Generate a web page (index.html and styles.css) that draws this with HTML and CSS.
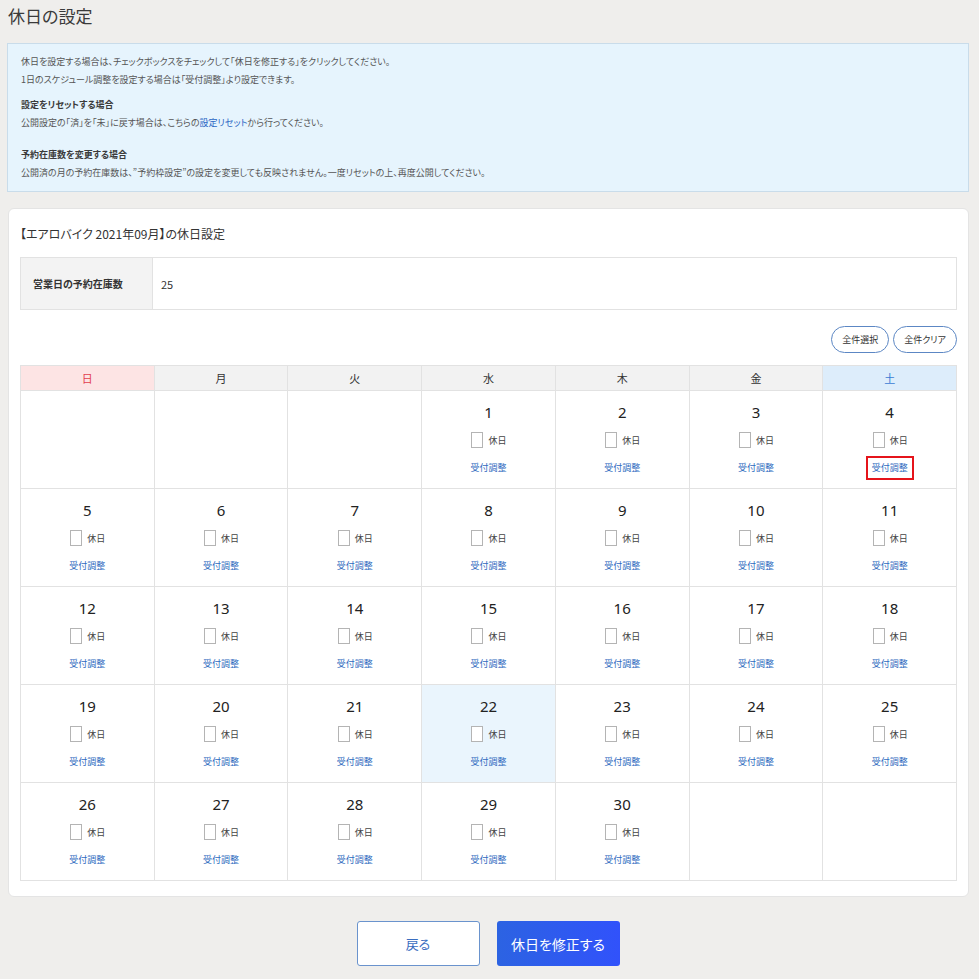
FILE: index.html
```html
<!DOCTYPE html>
<html lang="ja">
<head>
<meta charset="utf-8">
<title>休日の設定</title>
<link rel="stylesheet" href="styles.css">
</head>
<body>
<div class="page">
  <h1 class="title">休日の設定</h1>

  <div class="info">
    <p class="info-p">休日を設定する場合は、チェックボックスをチェックして「休日を修正する」をクリックしてください。<br>1日のスケジュール調整を設定する場合は「受付調整」より設定できます。</p>
    <p class="info-h">設定をリセットする場合</p>
    <p class="info-p">公開設定の「済」を「未」に戻す場合は、こちらの<a class="link" href="#">設定リセット</a>から行ってください。</p>
    <p class="info-h info-h2">予約在庫数を変更する場合</p>
    <p class="info-p">公開済の月の予約在庫数は、”予約枠設定”の設定を変更しても反映されません。一度リセットの上、再度公開してください。</p>
  </div>

  <div class="card">
    <h2 class="card-title">【エアロバイク 2021年09月】の休日設定</h2>
    <div class="stock">
      <div class="stock-label">営業日の予約在庫数</div>
      <div class="stock-value">25</div>
    </div>

    <div class="tools">
      <button class="pill">全件選択</button>
      <button class="pill">全件クリア</button>
    </div>

    <div class="cal">
      <div class="head sun">日</div>
      <div class="head">月</div>
      <div class="head">火</div>
      <div class="head">水</div>
      <div class="head">木</div>
      <div class="head">金</div>
      <div class="head sat">土</div>

      <div class="day empty"></div>
      <div class="day empty"></div>
      <div class="day empty"></div>
      <div class="day"><div class="num">1</div><label class="hol"><input type="checkbox" class="cb"><span>休日</span></label><a class="adj" href="#">受付調整</a></div>
      <div class="day"><div class="num">2</div><label class="hol"><input type="checkbox" class="cb"><span>休日</span></label><a class="adj" href="#">受付調整</a></div>
      <div class="day"><div class="num">3</div><label class="hol"><input type="checkbox" class="cb"><span>休日</span></label><a class="adj" href="#">受付調整</a></div>
      <div class="day"><div class="num">4</div><label class="hol"><input type="checkbox" class="cb"><span>休日</span></label><a class="adj marked" href="#">受付調整</a></div>

      <div class="day"><div class="num">5</div><label class="hol"><input type="checkbox" class="cb"><span>休日</span></label><a class="adj" href="#">受付調整</a></div>
      <div class="day"><div class="num">6</div><label class="hol"><input type="checkbox" class="cb"><span>休日</span></label><a class="adj" href="#">受付調整</a></div>
      <div class="day"><div class="num">7</div><label class="hol"><input type="checkbox" class="cb"><span>休日</span></label><a class="adj" href="#">受付調整</a></div>
      <div class="day"><div class="num">8</div><label class="hol"><input type="checkbox" class="cb"><span>休日</span></label><a class="adj" href="#">受付調整</a></div>
      <div class="day"><div class="num">9</div><label class="hol"><input type="checkbox" class="cb"><span>休日</span></label><a class="adj" href="#">受付調整</a></div>
      <div class="day"><div class="num">10</div><label class="hol"><input type="checkbox" class="cb"><span>休日</span></label><a class="adj" href="#">受付調整</a></div>
      <div class="day"><div class="num">11</div><label class="hol"><input type="checkbox" class="cb"><span>休日</span></label><a class="adj" href="#">受付調整</a></div>

      <div class="day"><div class="num">12</div><label class="hol"><input type="checkbox" class="cb"><span>休日</span></label><a class="adj" href="#">受付調整</a></div>
      <div class="day"><div class="num">13</div><label class="hol"><input type="checkbox" class="cb"><span>休日</span></label><a class="adj" href="#">受付調整</a></div>
      <div class="day"><div class="num">14</div><label class="hol"><input type="checkbox" class="cb"><span>休日</span></label><a class="adj" href="#">受付調整</a></div>
      <div class="day"><div class="num">15</div><label class="hol"><input type="checkbox" class="cb"><span>休日</span></label><a class="adj" href="#">受付調整</a></div>
      <div class="day"><div class="num">16</div><label class="hol"><input type="checkbox" class="cb"><span>休日</span></label><a class="adj" href="#">受付調整</a></div>
      <div class="day"><div class="num">17</div><label class="hol"><input type="checkbox" class="cb"><span>休日</span></label><a class="adj" href="#">受付調整</a></div>
      <div class="day"><div class="num">18</div><label class="hol"><input type="checkbox" class="cb"><span>休日</span></label><a class="adj" href="#">受付調整</a></div>

      <div class="day"><div class="num">19</div><label class="hol"><input type="checkbox" class="cb"><span>休日</span></label><a class="adj" href="#">受付調整</a></div>
      <div class="day"><div class="num">20</div><label class="hol"><input type="checkbox" class="cb"><span>休日</span></label><a class="adj" href="#">受付調整</a></div>
      <div class="day"><div class="num">21</div><label class="hol"><input type="checkbox" class="cb"><span>休日</span></label><a class="adj" href="#">受付調整</a></div>
      <div class="day today"><div class="num">22</div><label class="hol"><input type="checkbox" class="cb"><span>休日</span></label><a class="adj" href="#">受付調整</a></div>
      <div class="day"><div class="num">23</div><label class="hol"><input type="checkbox" class="cb"><span>休日</span></label><a class="adj" href="#">受付調整</a></div>
      <div class="day"><div class="num">24</div><label class="hol"><input type="checkbox" class="cb"><span>休日</span></label><a class="adj" href="#">受付調整</a></div>
      <div class="day"><div class="num">25</div><label class="hol"><input type="checkbox" class="cb"><span>休日</span></label><a class="adj" href="#">受付調整</a></div>

      <div class="day"><div class="num">26</div><label class="hol"><input type="checkbox" class="cb"><span>休日</span></label><a class="adj" href="#">受付調整</a></div>
      <div class="day"><div class="num">27</div><label class="hol"><input type="checkbox" class="cb"><span>休日</span></label><a class="adj" href="#">受付調整</a></div>
      <div class="day"><div class="num">28</div><label class="hol"><input type="checkbox" class="cb"><span>休日</span></label><a class="adj" href="#">受付調整</a></div>
      <div class="day"><div class="num">29</div><label class="hol"><input type="checkbox" class="cb"><span>休日</span></label><a class="adj" href="#">受付調整</a></div>
      <div class="day"><div class="num">30</div><label class="hol"><input type="checkbox" class="cb"><span>休日</span></label><a class="adj" href="#">受付調整</a></div>
      <div class="day empty"></div>
      <div class="day empty"></div>
    </div>
  </div>

  <div class="actions">
    <button class="btn btn-back">戻る</button>
    <button class="btn btn-submit">休日を修正する</button>
  </div>
</div>
</body>
</html>
```

FILE: styles.css
```css
* { box-sizing: border-box; }

html, body {
  margin: 0;
  padding: 0;
  background: #efeeec;
}

body {
  font-family: "Noto Sans CJK JP", "Noto Sans", sans-serif;
  color: #333;
  font-feature-settings: "palt";
}

.page {
  width: 962px;
  margin-left: 7px;
  padding-top: 6px;
}

.title {
  margin: 0 0 17px 1px;
  font-size: 17px;
  line-height: 20px;
  font-weight: 400;
  color: #3a3a3a;
}

.info {
  background: #e6f4fd;
  border: 1px solid #c9dcea;
  padding: 9px 13px 9px;
}

.info-p {
  margin: 0;
  font-size: 9px;
  line-height: 18px;
  color: #555;
}

.info-h {
  margin: 7px 0 0;
  font-size: 9px;
  line-height: 18px;
  font-weight: 700;
  color: #3a3a3a;
}

.info-h2 { margin-top: 14px; }

.link {
  color: #2a66c4;
  text-decoration: none;
}

.card {
  margin: 16px 0 0 1px;
  width: 961px;
  background: #fff;
  border: 1px solid #e4e4e4;
  border-radius: 6px;
  padding: 16px 11px 15px;
}

.card-title {
  margin: 0;
  font-size: 12px;
  line-height: 18px;
  font-weight: 400;
  color: #333;
}

.stock {
  margin-top: 14px;
  display: flex;
  height: 53px;
  border: 1px solid #e2e2e2;
}

.stock-label {
  width: 132px;
  background: #f3f3f3;
  border-right: 1px solid #e2e2e2;
  display: flex;
  align-items: center;
  padding-left: 12px;
  font-size: 10px;
  font-weight: 700;
  color: #333;
}

.stock-value {
  display: flex;
  align-items: center;
  padding-left: 8px;
  font-size: 11px;
  color: #333;
}

.tools {
  margin-top: 16px;
  display: flex;
  justify-content: flex-end;
  gap: 4px;
}

.pill {
  height: 27px;
  padding: 0 10px;
  border: 1px solid #5c87c4;
  border-radius: 14px;
  background: #fff;
  font-family: inherit;
  font-feature-settings: "palt";
  font-size: 9px;
  color: #333;
}

.cal {
  margin-top: 12px;
  display: grid;
  grid-template-columns: repeat(7, 1fr);
  grid-template-rows: 24px repeat(5, 97px);
  gap: 1px;
  padding: 1px;
  background: #e2e2e2;
}

.head {
  background: #f2f2f2;
  display: flex;
  align-items: center;
  justify-content: center;
  font-size: 11px;
  color: #333;
}

.head.sun { background: #fde4e4; color: #e2404f; }
.head.sat { background: #ddedfb; color: #3b7bd4; }

.day {
  background: #fff;
  display: flex;
  flex-direction: column;
  align-items: center;
  padding-top: 11px;
}

.day.today { background: #eaf5fd; }

.num {
  font-family: "Noto Sans", sans-serif;
  font-size: 15px;
  line-height: 20px;
  color: #222;
}

.hol {
  margin-top: 10px;
  height: 16px;
  display: flex;
  align-items: center;
  gap: 5px;
  font-size: 9px;
  color: #444;
  padding-left: 1px;
}

.cb {
  appearance: none;
  -webkit-appearance: none;
  margin: 0;
  width: 12px;
  height: 16px;
  border: 1px solid #b4b4b4;
  background: #fff;
}

.adj {
  margin-top: 13px;
  font-size: 9px;
  line-height: 14px;
  color: #2f6bc0;
  text-decoration: none;
}

.adj.marked {
  outline: 2px solid #e5141b;
  outline-offset: 4px;
  line-height: 12px;
  margin-top: 14px;
}

.actions {
  margin-top: 24px;
  display: flex;
  justify-content: center;
  gap: 17px;
}

.btn {
  width: 123px;
  height: 45px;
  border-radius: 3px;
  font-family: inherit;
  font-feature-settings: "palt";
}

.btn-back {
  background: #fff;
  border: 1px solid #6a93cd;
  color: #3a6dbf;
  font-size: 13px;
}

.btn-submit {
  border: none;
  background: linear-gradient(90deg, #2c63e2, #3152fb);
  color: #fff;
  font-size: 14px;
}
```
